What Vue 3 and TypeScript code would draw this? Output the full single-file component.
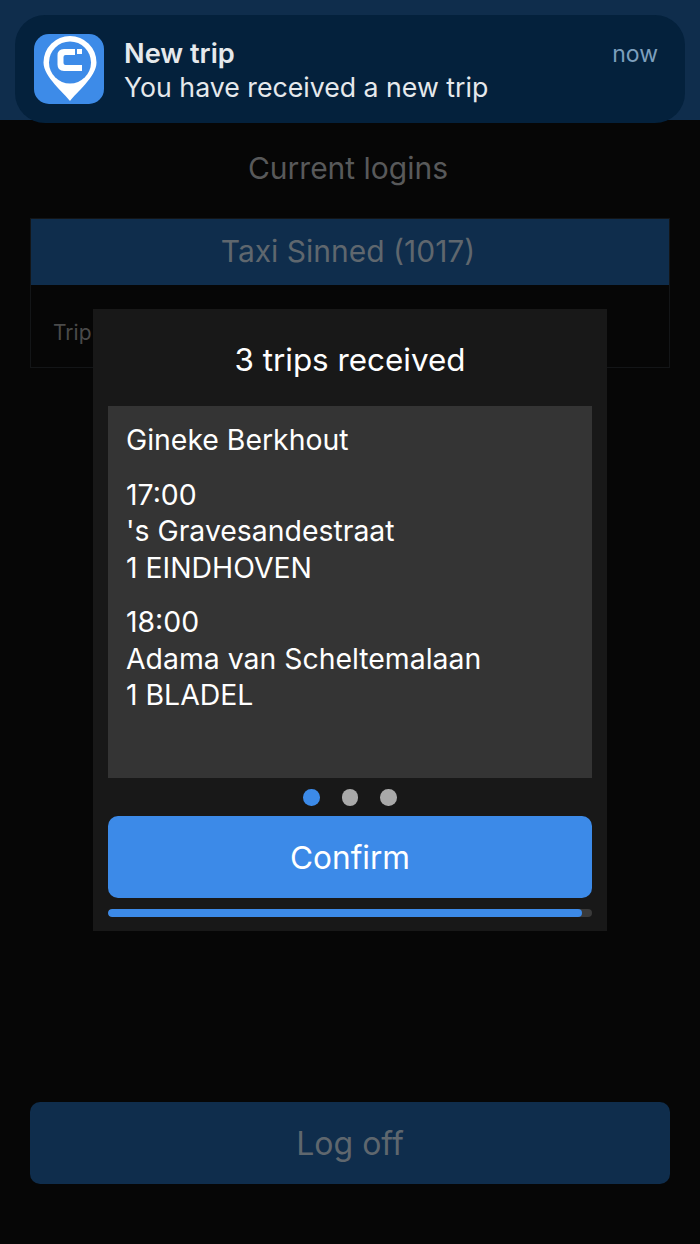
<script setup lang="ts">
const dots: boolean[] = [true, false, false]
const stops: { time: string; street: string; city: string }[] = [
  { time: '17:00', street: "'s Gravesandestraat", city: '1 EINDHOVEN' },
  { time: '18:00', street: 'Adama van Scheltemalaan', city: '1 BLADEL' },
]
</script>

<template>
  <div class="page">
    <div class="topbar"></div>
    <h1 class="heading">Current logins</h1>
    <section class="card">
      <div class="card-head">Taxi Sinned (1017)</div>
      <div class="card-body">Trip</div>
    </section>
    <div class="spacer"></div>
    <button class="logoff">Log off</button>

    <div class="notice">
      <svg class="app-icon" viewBox="0 0 70 70" width="70" height="70" aria-hidden="true">
        <rect width="70" height="70" rx="15" fill="#3d8be8" />
        <path d="M36 67 C30.5 59 9.5 43 9.5 28.5 A26.5 26.5 0 1 1 62.5 28.5 C62.5 43 41.5 59 36 67 Z" fill="#fff" />
        <circle cx="36" cy="28.5" r="21" fill="#3d8be8" />
        <path d="M41 15 H30 Q23.5 15 23.5 21.5 V30.5 Q23.5 37 30 37 H48 V31 H31.5 Q29.5 31 29.5 29 V23 Q29.5 21 31.5 21 H41 Z" fill="#fff" />
        <rect x="43" y="15" width="5" height="5" fill="#fff" />
      </svg>
      <div class="notice-text">
        <div class="notice-title">New trip</div>
        <div class="notice-body">You have received a new trip</div>
      </div>
      <div class="notice-time">now</div>
    </div>

    <div class="modal">
      <h2 class="modal-title">3 trips received</h2>
      <div class="trip">
        <p class="line-block">Gineke Berkhout</p>
        <p v-for="s in stops" :key="s.time" class="line-block">
          {{ s.time }}<br />{{ s.street }}<br />{{ s.city }}
        </p>
      </div>
      <div class="dots">
        <span v-for="(on, i) in dots" :key="i" class="dot" :class="{ on }"></span>
      </div>
      <button class="confirm">Confirm</button>
      <div class="track"><div class="fill" :style="{ width: '98%' }"></div></div>
    </div>
  </div>
</template>

<style>
html, body { margin: 0; background: #060606; }
</style>

<style scoped>
.page {
  position: relative;
  width: 700px;
  height: 1244px;
  overflow: hidden;
  display: flex;
  flex-direction: column;
  background: #060606;
  font-family: Inter, "Liberation Sans", sans-serif;
}
.topbar { height: 120px; flex: none; background: #0f2d4c; }
.heading {
  margin: 30px 0 0;
  padding-right: 4px;
  height: 36px;
  line-height: 36px;
  text-align: center;
  font-size: 30px;
  font-weight: 400;
  color: #58595a;
}
.card {
  margin: 32px 30px 0;
  height: 150px;
  box-sizing: border-box;
  border: 1px solid #131517;
  flex: none;
}
.card-head {
  height: 66px;
  padding-right: 4px;
  background: #0f2d4c;
  color: #5f676e;
  font-size: 30px;
  line-height: 64px;
  text-align: center;
}
.card-body {
  padding: 36px 22px 0;
  font-size: 21px;
  line-height: 24px;
  color: #4a4a4a;
}
.spacer { flex: 1; }
.logoff {
  flex: none;
  margin: 0 30px 60px;
  height: 82px;
  border: 0;
  border-radius: 10px;
  background: #0f2d4c;
  color: #5f676e;
  font: 400 32px Inter, "Liberation Sans", sans-serif;
}
.notice {
  position: absolute;
  left: 15px;
  top: 15px;
  width: 670px;
  height: 108px;
  box-sizing: border-box;
  border-radius: 30px;
  background: #04213c;
  display: flex;
  padding: 19px 27px 0 19px;
}
.app-icon { flex: none; }
.notice-text { margin-left: 20px; flex: 1; }
.notice-title {
  font-size: 27.2px;
  font-weight: 600;
  line-height: 40px;
  color: #e6e9ec;
}
.notice-body {
  margin-top: -2px;
  font-size: 26.7px;
  line-height: 30px;
  color: #e6e9ec;
}
.notice-time {
  font-size: 23px;
  line-height: 40px;
  color: #7d9fbd;
}
.modal {
  position: absolute;
  left: 93px;
  top: 309px;
  width: 514px;
  height: 622px;
  box-sizing: border-box;
  padding: 0 15px;
  background: #181818;
  display: flex;
  flex-direction: column;
}
.modal-title {
  margin: 0;
  height: 97px;
  line-height: 103px;
  text-align: center;
  font-size: 31.4px;
  font-weight: 400;
  color: #fff;
}
.trip {
  height: 372px;
  flex: none;
  box-sizing: border-box;
  padding: 16px 18px 0;
  background: #343434;
  color: #fff;
  font-size: 28.4px;
  line-height: 36.5px;
}
.line-block { margin: 0 0 18px; }
.dots {
  height: 38px;
  flex: none;
  display: flex;
  align-items: center;
  justify-content: center;
  gap: 22px;
  padding-top: 1px;
  box-sizing: border-box;
}
.dot { width: 16.5px; height: 16.5px; border-radius: 50%; background: #a9a9a9; }
.dot.on { background: #3c8ae8; }
.confirm {
  flex: none;
  height: 82px;
  border: 0;
  border-radius: 10px;
  background: #3c8ae8;
  color: #fff;
  font: 400 31.6px Inter, "Liberation Sans", sans-serif;
}
.track {
  margin-top: 11px;
  height: 8px;
  flex: none;
  border-radius: 4px;
  background: #3a3a3a;
  overflow: hidden;
}
.fill { height: 100%; border-radius: 4px; background: #3c8ae8; }
</style>
